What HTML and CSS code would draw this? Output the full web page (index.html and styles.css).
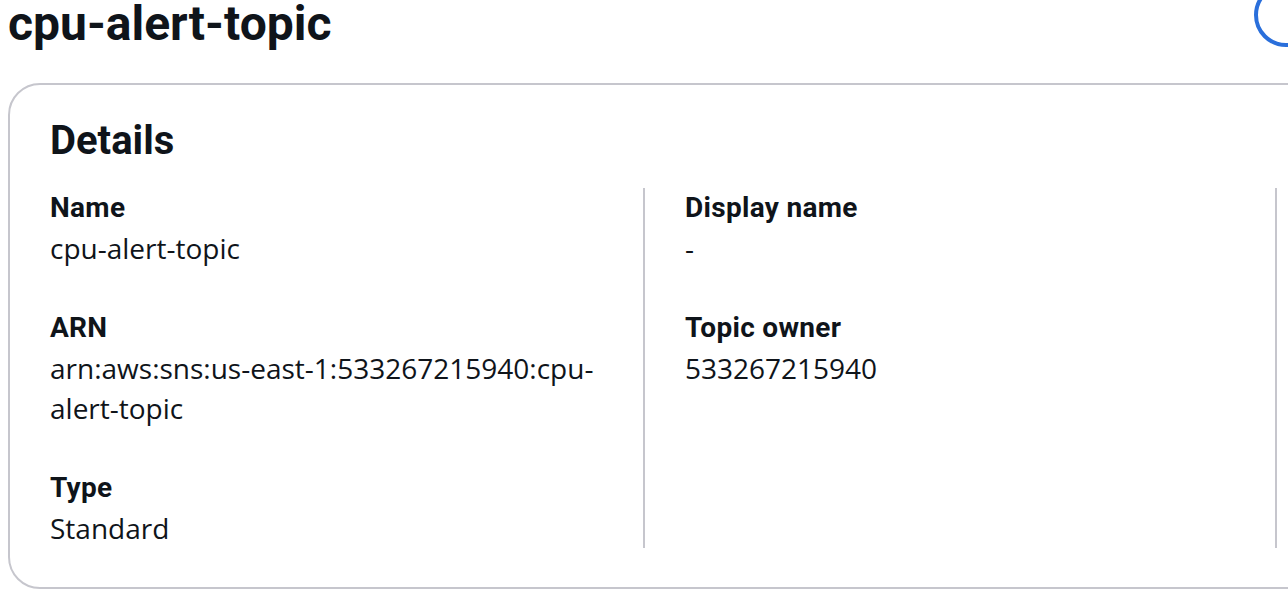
FILE: index.html
```html
<!DOCTYPE html>
<html lang="en">
<head>
<meta charset="utf-8">
<title>cpu-alert-topic</title>
<link rel="stylesheet" href="styles.css">
</head>
<body>
<div class="page">
  <header class="page-header">
    <h1 class="page-title">cpu-alert-topic</h1>
    <button class="edit-btn" type="button" aria-label="Edit"></button>
  </header>
  <section class="card">
    <h2 class="card-title">Details</h2>
    <div class="columns">
      <div class="col">
        <div class="field">
          <div class="label">Name</div>
          <div class="value">cpu-alert-topic</div>
        </div>
        <div class="field">
          <div class="label">ARN</div>
          <div class="value">arn:aws:sns:us-east-1:533267215940:cpu-alert-topic</div>
        </div>
        <div class="field">
          <div class="label">Type</div>
          <div class="value">Standard</div>
        </div>
      </div>
      <div class="col col-div">
        <div class="field">
          <div class="label">Display name</div>
          <div class="value">-</div>
        </div>
        <div class="field">
          <div class="label">Topic owner</div>
          <div class="value">533267215940</div>
        </div>
      </div>
      <div class="col col-div"></div>
    </div>
  </section>
</div>
</body>
</html>
```
FILE: styles.css
```css
html, body {
  margin: 0;
  padding: 0;
  overflow: hidden;
  background: #ffffff;
}
body {
  width: 1288px;
  height: 592px;
  color: #0f141a;
  font-family: "Open Sans", "Noto Sans", sans-serif;
}
.page {
  padding-left: 8px;
}
.page-header {
  display: flex;
  justify-content: space-between;
  align-items: flex-start;
  margin-top: -17px;
  height: 64px;
}
.page-title {
  margin: 17px 0 0 0;
  padding: 0;
  font-family: Roboto, "Liberation Sans", sans-serif;
  font-weight: 700;
  font-size: 48px;
  line-height: 48px;
  color: #0f141a;
}
.edit-btn {
  flex: none;
  width: 140px;
  height: 64px;
  margin-right: -106px;
  box-sizing: border-box;
  border: 4px solid #2a6fdb;
  border-radius: 40px;
  background: #ffffff;
  padding: 0;
}
.card {
  margin-top: 36px;
  width: 1400px;
  box-sizing: border-box;
  border: 2px solid #c6c6cd;
  border-radius: 32px;
  padding: 32px 0 39px 40px;
}
.card-title {
  margin: 0 0 23px 0;
  font-family: Roboto, "Liberation Sans", sans-serif;
  font-weight: 700;
  font-size: 40px;
  line-height: 48px;
  color: #0f141a;
}
.columns {
  display: grid;
  grid-template-columns: 593px 632px 632px;
}
.col {
  box-sizing: border-box;
  padding-right: 40px;
  display: flex;
  flex-direction: column;
  gap: 40px;
}
.col-div {
  border-left: 2px solid #c6c6cd;
  padding-left: 40px;
}
.label {
  font-family: Roboto, "Liberation Sans", sans-serif;
  font-weight: 700;
  font-size: 28px;
  line-height: 40px;
  letter-spacing: 0.3px;
}
.value {
  font-size: 28px;
  line-height: 40px;
}
```
